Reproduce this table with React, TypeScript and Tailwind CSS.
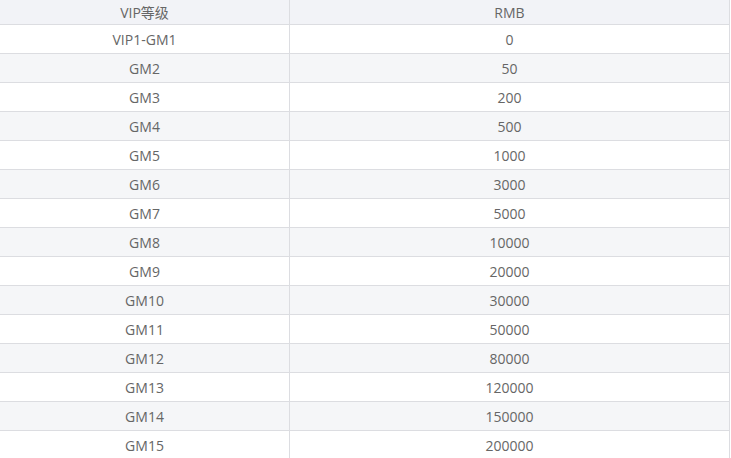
import React from 'react';

const rows = [
    ['VIP1-GM1', '0'],
    ['GM2', '50'],
    ['GM3', '200'],
    ['GM4', '500'],
    ['GM5', '1000'],
    ['GM6', '3000'],
    ['GM7', '5000'],
    ['GM8', '10000'],
    ['GM9', '20000'],
    ['GM10', '30000'],
    ['GM11', '50000'],
    ['GM12', '80000'],
    ['GM13', '120000'],
    ['GM14', '150000'],
    ['GM15', '200000'],
];

const App = () => {
    return (
        <div className="bg-white w-[731px] h-[458px] overflow-hidden font-['Open_Sans','Noto_Sans_CJK_SC',sans-serif] text-[14px] text-[#666]">
            <div className="w-[730px] border-r border-[#dcdde1]">
                <div className="flex h-[25px] bg-[#f2f3f7] border-b border-[#dcdde1]">
                    <div className="w-[290px] border-r border-[#dcdde1] flex items-center justify-center">VIP等级</div>
                    <div className="flex-1 flex items-center justify-center">RMB</div>
                </div>
                {rows.map((r, i) => (
                    <div
                        key={r[0]}
                        className={`flex h-[29px] border-b border-[#dcdde1] ${i % 2 === 1 ? 'bg-[#f5f6f8]' : 'bg-white'}`}
                    >
                        <div className="w-[290px] border-r border-[#dcdde1] flex items-center justify-center">{r[0]}</div>
                        <div className="flex-1 flex items-center justify-center">{r[1]}</div>
                    </div>
                ))}
            </div>
        </div>
    );
};

export default App;
